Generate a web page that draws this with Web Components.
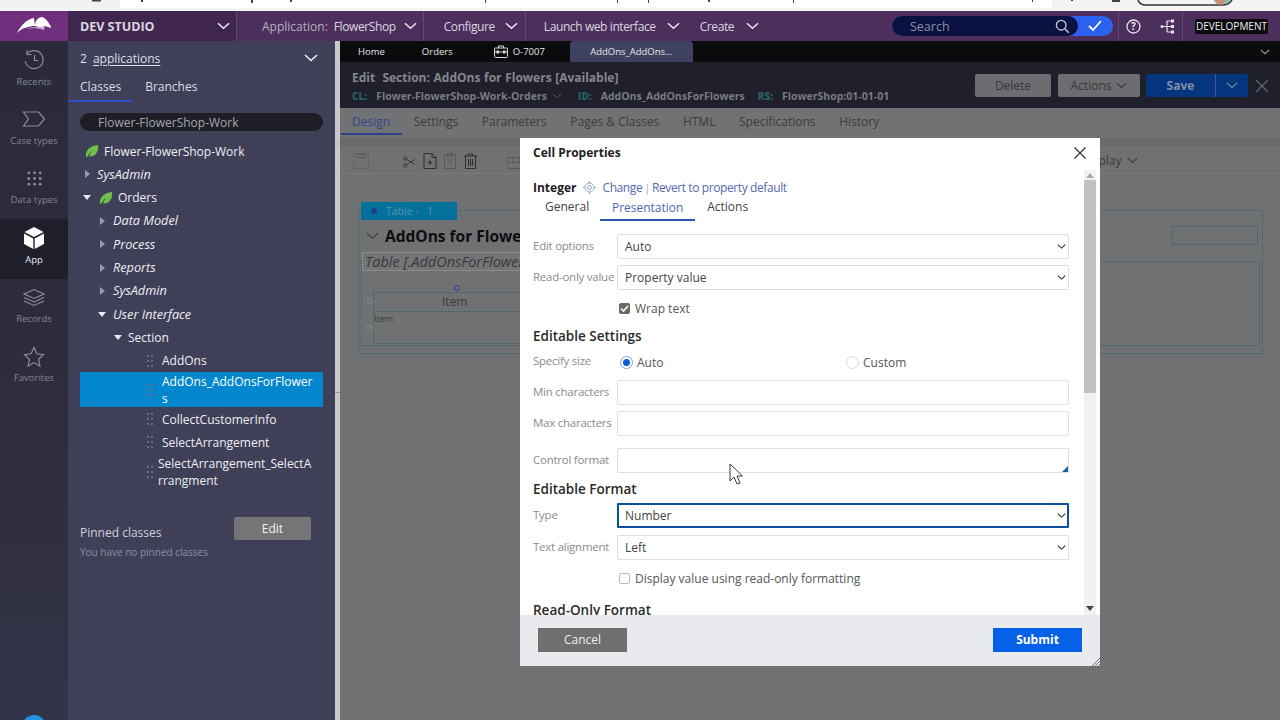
<!DOCTYPE html>
<html>
<head>
<meta charset="utf-8">
<title>Dev Studio</title>
<style>
html, body { margin: 0; height: 720px; overflow: hidden; font-family: "Open Sans", "Liberation Sans", sans-serif; background: #6f7072; }
</style>
</head>
<body>
<app-shell></app-shell>
<script>
// small svg helpers shared by the elements
const chevron = (w, color, sw = 1.6) => `<svg width="${w}" height="${Math.round(w * 0.6)}" viewBox="0 0 14 8" style="display:block;flex:none"><path d="M1 1l6 5.5L13 1" fill="none" stroke="${color}" stroke-width="${sw}"/></svg>`
const leaf = () => `<svg width="14" height="14" viewBox="0 0 14 14" style="display:block;flex:none"><path d="M1 13C0 6 5 2 13 1c1 7-3 12-9 11.500L7 6 2 13z" fill="#6fbf4b"/></svg>`

// browser chrome left over at the top of the capture
class BrowserStrip extends HTMLElement {
    constructor() {
        super()
        this.attachShadow({ mode: 'open' }).innerHTML = `
<style>
:host { display: block; height: 11px; background: #fff; overflow: hidden; }
svg { display: block; }
</style>
<svg width="1280" height="11" viewBox="0 0 1280 11">
    <rect width="120" height="11" fill="#f1f1f1"/>
    <rect x="1052" width="228" height="11" fill="#f3f3f3"/>
    <rect y="8" width="1280" height="3" fill="#f4f4f4"/>
    <path d="M92 0h9v1.500h-9zM141 0h2v2h-2zM251 0h2v3h-2zM290 0h2v2h-2zM485 0h1v3h-1zM617 0h1v3h-1zM648 0h1v3h-1zM708 0h2v2h-2zM793 0h1v3h-1zM1032 0h1v2h-1zM1071 0h2v1h-2zM1112 0h8v2h-8z" fill="#444"/>
    <path d="M1138 0c1 3 4 5 8 5h76c4 0 8-2 10-5" fill="none" stroke="#333" stroke-width="1.500"/>
    <path d="M1214 0c1 3 5 6 10 4l4-4z" fill="#c98f76"/>
    <path d="M1222 4l4-4h5c-1 2-4 4-9 4z" fill="#7fc0a6"/>
</svg>`
    }
}
customElements.define('browser-strip', BrowserStrip)

class BarMenu extends HTMLElement {
    constructor() {
        super()
        const gap = this.getAttribute('gap') || 12
        this.attachShadow({ mode: 'open' }).innerHTML = `
<style>
:host { display: flex; align-items: center; height: 30px; font-size: 12px; letter-spacing: -0.400px; color: #dcd6e0; box-sizing: border-box; }
.c { margin-left: ${gap}px; }
</style>
<slot></slot><span class="c">${chevron(13, '#eee8f0')}</span>`
    }
}
customElements.define('bar-menu', BarMenu)

class TopBar extends HTMLElement {
    constructor() {
        super()
        this.attachShadow({ mode: 'open' }).innerHTML = `
<style>
:host { display: flex; height: 30px; background: #4c2f5c; color: #dcd6e0; font-size: 12px; }
.logo { width: 68px; background: #6f2f7d; display: flex; align-items: center; justify-content: center; flex: none; }
.studio { width: 169px; background: #40264f; display: flex; align-items: center; padding-left: 12px; box-sizing: border-box; font-weight: 700; font-size: 12.500px; color: #dcd6e0; flex: none; border-right: 1px solid #5f4a6d; }
.studio span { flex: 1; }
.studio svg { margin-right: 6px; }
.dim { color: #b9aec2; margin-right: 6px; letter-spacing: 0; }
bar-menu { padding-left: 20px; padding-right: 7px; border-right: 1px solid #624a70; }
#app { padding-left: 25px; padding-right: 6px; }
#launch { padding-left: 18px; padding-right: 0; border: 0; }
#create { padding-left: 20px; padding-right: 0; border: 0; }
.search { margin-left: auto; width: 221px; height: 20px; background: #2b63ee; border-radius: 10px; display: flex; align-items: center; align-self: center; flex: none; }
.field { width: 186px; height: 20px; background: #0b1140; border-radius: 10px; display: flex; align-items: center; justify-content: space-between; padding: 0 8px 0 18px; box-sizing: border-box; color: #8d90a8; font-size: 12.500px; }
.tick { margin-left: 10px; }
.tools { margin-left: 5px; width: 65px; border-left: 1px solid #624a70; border-right: 1px solid #624a70; display: flex; align-items: center; justify-content: space-between; padding: 0 7px 0 7px; box-sizing: border-box; flex: none; }
.env { margin: 0 12px 0 12px; align-self: center; height: 15px; width: 73px; background: #0b0a10; border-radius: 2px; color: #eee; font-size: 10px; line-height: 15px; text-align: center; flex: none; }
</style>
<div class="logo">
    <svg width="36" height="18" viewBox="0 0 36 18">
        <path d="M1 16C5 8 11 2 18 1l1 8C13 9 6 11 1 16z" fill="#fff"/>
        <path d="M19 9C19 3 23 0 26 0c4 1 7 6 9 10v1l-6-2c-3 2-7 1-10 0z" fill="#fff"/>
        <path d="M10 12c5-2 12-2 19-2l-1 3c-6-2-12-2-18-1z" fill="#c9a9d0"/>
    </svg>
</div>
<div class="studio"><span>DEV STUDIO</span>${chevron(13, '#eee8f0')}</div>
<bar-menu id="app" gap="8"><span class="dim">Application:</span>FlowerShop</bar-menu>
<bar-menu id="cfg" gap="10">Configure</bar-menu>
<bar-menu id="launch" gap="11">Launch web interface</bar-menu>
<bar-menu id="create">Create</bar-menu>
<div class="search">
    <div class="field">Search
        <svg width="15" height="15" viewBox="0 0 15 15"><circle cx="6.200" cy="6.200" r="4.800" fill="none" stroke="#c9cbd8" stroke-width="1.300"/><path d="M9.800 9.800l4 4" stroke="#c9cbd8" stroke-width="1.500"/></svg>
    </div>
    <svg class="tick" width="14" height="12" viewBox="0 0 14 12"><path d="M1 6l4 4 8-9" fill="none" stroke="#fff" stroke-width="1.800"/></svg>
</div>
<div class="tools">
    <svg width="15" height="15" viewBox="0 0 15 15"><circle cx="7.500" cy="7.500" r="6.500" fill="none" stroke="#e8e4ec" stroke-width="1.300"/><text x="7.500" y="11" text-anchor="middle" font-size="10" font-weight="700" font-family="Open Sans" fill="#e8e4ec">?</text></svg>
    <svg width="15" height="15" viewBox="0 0 15 15"><path d="M2 7.500h5M7 2h4M7 7.500h4M7 13h4M7 2v11" fill="none" stroke="#e8e4ec" stroke-width="1.200"/><circle cx="2" cy="7.500" r="1.500" fill="#e8e4ec"/><rect x="11" y="0.500" width="3" height="3" fill="#e8e4ec"/><rect x="11" y="6" width="3" height="3" fill="#e8e4ec"/><rect x="11" y="11.500" width="3" height="3" fill="#e8e4ec"/></svg>
</div>
<div class="env">DEVELOPMENT</div>`
    }
}
customElements.define('top-bar', TopBar)

class RailItem extends HTMLElement {
    constructor() {
        super()
        this.attachShadow({ mode: 'open' }).innerHTML = `
<style>
:host { display: flex; flex-direction: column; align-items: center; height: 59.400px; padding-top: 7px; box-sizing: border-box; color: #83849a; font-size: 9.500px; }
:host([active]) { background: #1f1f2b; color: #e8e8ee; }
.i { height: 24px; display: flex; align-items: center; }
.l { margin-top: 2.500px; line-height: 14px; }
</style>
<div class="i"><slot name="icon"></slot></div><div class="l"><slot></slot></div>`
    }
}
customElements.define('rail-item', RailItem)

class NavRail extends HTMLElement {
    constructor() {
        super()
        const s = '#8b8c9f'
        this.attachShadow({ mode: 'open' }).innerHTML = `
<style>
:host { display: block; width: 68px; flex: none; background: linear-gradient(#2a2a3b, #2f2d3c 60%, #33344a); position: relative; overflow: hidden; }
svg { display: block; }
.help { position: absolute; left: 22px; top: 674px; width: 24px; height: 24px; border-radius: 50%; background: #1e93e0; }
</style>
<rail-item><svg slot="icon" width="24" height="24" viewBox="0 0 24 24" fill="none" stroke="${s}" stroke-width="1.200"><path d="M5 6a9 9 0 1 1-1.800 7"/><path d="M5 2v4.500h4.500M12.500 7v5.500H16"/></svg>Recents</rail-item>
<rail-item><svg slot="icon" width="24" height="18" viewBox="0 0 24 18" fill="none" stroke="${s}" stroke-width="1.200"><path d="M1.500 2h15l6 7-6 7h-15l5-7z"/></svg>Case types</rail-item>
<rail-item><svg slot="icon" width="17" height="17" viewBox="0 0 18 18" fill="${s}"><circle cx="3" cy="3" r="1.500"/><circle cx="9" cy="3" r="1.500"/><circle cx="15" cy="3" r="1.500"/><circle cx="3" cy="9" r="1.500"/><circle cx="9" cy="9" r="1.500"/><circle cx="15" cy="9" r="1.500"/><circle cx="3" cy="15" r="1.500"/><circle cx="9" cy="15" r="1.500"/><circle cx="15" cy="15" r="1.500"/></svg>Data types</rail-item>
<rail-item active><svg slot="icon" width="22" height="24" viewBox="0 0 22 24" fill="#fff"><path d="M11 1l9.500 5L11 11 1.500 6z"/><path d="M1 7.500l9.300 5V23L1 18z"/><path d="M21 7.500l-9.300 5V23L21 18z"/></svg>App</rail-item>
<rail-item><svg slot="icon" width="22" height="20" viewBox="0 0 22 20" fill="none" stroke="${s}" stroke-width="1.100"><path d="M11 1.500L21 6l-10 4.500L1 6z"/><path d="M1 9.500L11 14l10-4.500M1 13l10 4.500L21 13"/></svg>Records</rail-item>
<rail-item><svg slot="icon" width="22" height="22" viewBox="0 0 22 22" fill="none" stroke="${s}" stroke-width="1.200"><path d="M11 1.500l2.900 6.300 6.600.8-4.900 4.600 1.300 6.800-5.900-3.400-5.900 3.400 1.300-6.800L1.500 8.600l6.600-.8z"/></svg>Favorites</rail-item>
<div class="help"></div>`
    }
}
customElements.define('nav-rail', NavRail)

class TreeRow extends HTMLElement {
    constructor() {
        super()
        const caret = this.getAttribute('caret')
        const level = +(this.getAttribute('level') || 0)
        const tri = caret === 'open'
            ? `<svg width="10" height="7" viewBox="0 0 10 7"><path d="M1 1h8L5 6z" fill="#e8e8ee"/></svg>`
            : `<svg width="7" height="10" viewBox="0 0 7 10"><path d="M1 1v8l5-4z" fill="#9a9bac"/></svg>`
        let head = ''
        if (caret) head += `<span class="car">${tri}</span>`
        if (this.hasAttribute('leaf')) head += `<span class="leaf">${leaf()}</span>`
        if (this.hasAttribute('drag')) head += `<svg class="drag" width="6" height="12" viewBox="0 0 6 12" fill="#6a6b80"><rect width="2" height="2"/><rect x="4" width="2" height="2"/><rect y="5" width="2" height="2"/><rect x="4" y="5" width="2" height="2"/><rect y="10" width="2" height="2"/><rect x="4" y="10" width="2" height="2"/></svg>`
        this.attachShadow({ mode: 'open' }).innerHTML = `
<style>
:host { display: flex; align-items: center; min-height: 23.300px; box-sizing: border-box; font-size: 12px; line-height: 17px; color: #eeeef3; padding-left: ${[2, 17, 33, 67][level]}px; }
:host([italic]) { font-style: italic; font-size: 12.700px; }
:host([italic][level]) .car { margin-right: 6px; }
:host([selected]) { background: #0287cf; min-height: 35px; color: #fff; }
:host([root]) { padding-left: 5px; }
:host([tight]) { margin-top: 1.500px; }
.car { width: 10px; display: flex; justify-content: center; flex: none; margin-right: 5px; }
.leaf { flex: none; margin-right: 5px; }
.car + .leaf { margin-left: 2px; }
.drag { flex: none; margin-right: 9px; }
:host([tight]) .drag { margin-right: 5px; }
.t { word-break: break-all; min-width: 0; flex: 1; padding-right: 8px; }
</style>
${head}<span class="t"><slot></slot></span>`
    }
}
customElements.define('tree-row', TreeRow)

class ExplorerPanel extends HTMLElement {
    constructor() {
        super()
        this.attachShadow({ mode: 'open' }).innerHTML = `
<style>
:host { display: block; width: 267px; flex: none; background: #3f4058; box-sizing: border-box; padding: 0 12px; color: #dedee6; font-size: 12px; overflow: hidden; }
.apps { height: 34px; display: flex; align-items: center; justify-content: space-between; padding-right: 5px; }
.apps u { margin-left: 6px; text-underline-offset: 2px; }
.tabs { display: flex; margin: 0 -12px; padding-left: 12px; height: 27px; position: relative; gap: 24px; line-height: 24px; }
.tabs::after { content: ""; position: absolute; left: 0; bottom: 0; width: 65px; height: 2px; background: #2c4fc0; }
.find { margin-top: 11px; height: 18px; line-height: 19px; border-radius: 9px; background: #1d1e26; color: #a5a6ad; padding-left: 18px; }
.tree { margin-top: 8.400px; }
.pin { display: flex; justify-content: space-between; margin-top: 27.500px; padding-right: 12px; }
.pin span { margin-top: 8px; line-height: 16px; color: #d0d0da; }
.edit { width: 77px; height: 23px; line-height: 23px; text-align: center; background: #757577; border-radius: 2px; color: #f2f2f2; }
.none { font-size: 10px; color: #8d8ea2; line-height: 14px; margin-top: 4px; }
</style>
<div class="apps"><span>2<u>applications</u></span>${chevron(14, '#eee')}</div>
<div class="tabs"><span>Classes</span><span>Branches</span></div>
<div class="find">Flower-FlowerShop-Work</div>
<div class="tree">
    <tree-row root leaf>Flower-FlowerShop-Work</tree-row>
    <tree-row caret="closed" italic>SysAdmin</tree-row>
    <tree-row caret="open" leaf>Orders</tree-row>
    <tree-row level="1" caret="closed" italic>Data Model</tree-row>
    <tree-row level="1" caret="closed" italic>Process</tree-row>
    <tree-row level="1" caret="closed" italic>Reports</tree-row>
    <tree-row level="1" caret="closed" italic>SysAdmin</tree-row>
    <tree-row level="1" caret="open" italic>User Interface</tree-row>
    <tree-row level="2" caret="open">Section</tree-row>
    <tree-row level="3" drag>AddOns</tree-row>
    <tree-row level="3" drag selected>AddOns_AddOnsForFlowers</tree-row>
    <tree-row level="3" drag>CollectCustomerInfo</tree-row>
    <tree-row level="3" drag>SelectArrangement</tree-row>
    <tree-row level="3" drag tight>SelectArrangement_SelectArrangment</tree-row>
</div>
<div class="pin"><span>Pinned classes</span><div class="edit">Edit</div></div>
<div class="none">You have no pinned classes</div>`
    }
}
customElements.define('explorer-panel', ExplorerPanel)

class DocTabs extends HTMLElement {
    constructor() {
        super()
        this.attachShadow({ mode: 'open' }).innerHTML = `
<style>
:host { display: flex; align-items: flex-end; height: 21px; background: #0b0b0d; color: #e4e4e8; font-size: 9.500px; padding-left: 18px; position: relative; }
span { line-height: 21px; }
.o { margin-left: 37px; }
.c { margin-left: 41px; display: flex; align-items: center; gap: 5px; }
.a { margin-left: 25px; width: 123px; height: 21px; background: #3e4260; border-radius: 4px 4px 0 0; text-align: center; }
.m { position: absolute; right: 10px; top: 8px; }
</style>
<span>Home</span><span class="o">Orders</span>
<span class="c"><svg width="14" height="13" viewBox="0 0 14 13" fill="none" stroke="#d8d8dc"><rect x="0.500" y="3" width="13" height="9.500" rx="1"/><path d="M4.500 3V1h5v2M.5 7h13"/><rect x="3" y="6" width="1.500" height="2" fill="#d8d8dc"/><rect x="9.500" y="6" width="1.500" height="2" fill="#d8d8dc"/></svg>O-7007</span>
<span class="a">AddOns_AddOns...</span>
<span class="m">${chevron(10, '#99999d')}</span>`
    }
}
customElements.define('doc-tabs', DocTabs)

class EditHeader extends HTMLElement {
    constructor() {
        super()
        this.attachShadow({ mode: 'open' }).innerHTML = `
<style>
:host { display: flex; height: 46px; background: #1f202b; padding-left: 12px; color: #85868c; font-weight: 700; position: relative; }
.txt { flex: 1; }
.h { font-size: 12px; line-height: 16px; margin-top: 8px; word-spacing: 0.500px; }
.s { font-size: 10.500px; line-height: 14px; margin-top: 3px; display: flex; align-items: center; color: #797b82; white-space: nowrap; }
.s b { color: #2b5e5f; margin-right: 9px; font-size: 10px; }
.s svg { margin: 0 0 0 5px; }
.btns { display: flex; align-items: center; height: 23px; margin-top: 12px; font-size: 12px; font-weight: 400; color: #37383b; }
.b { height: 23px; line-height: 23px; background: #6c6d70; border-radius: 2px; text-align: center; box-sizing: border-box; }
.act { display: flex; align-items: center; justify-content: center; gap: 5px; width: 82px; margin-left: 7px; }
.save { width: 69px; margin-left: 6px; background: #04357d; color: #7f8fa9; font-weight: 700; border-radius: 2px 0 0 2px; }
.more { width: 33px; display: flex; align-items: center; justify-content: center; background: #04357d; border-left: 1px solid #3a5a90; border-radius: 0 2px 2px 0; box-sizing: border-box; }
.x { margin: 0 12px 0 8px; display: block; }
</style>
<div class="txt">
    <div class="h">Edit&nbsp; Section: AddOns for Flowers [Available]</div>
    <div class="s"><b>CL:</b>Flower-FlowerShop-Work-Orders ${chevron(10, '#5e6068', 1.200)}<b style="margin-left:16px">ID:</b>AddOns_AddOnsForFlowers<b style="margin-left:13px">RS:</b>FlowerShop:01-01-01</div>
</div>
<div class="btns">
    <div class="b" style="width:76px">Delete</div>
    <div class="b act">Actions ${chevron(11, '#37383b', 1.400)}</div>
    <div class="b save">Save</div>
    <div class="b more">${chevron(12, '#7f8fa9', 1.400)}</div>
    <svg class="x" width="12" height="12" viewBox="0 0 12 12"><path d="M0 0l12 12M12 0L0 12" stroke="#6e6f74" stroke-width="1.200"/></svg>
</div>`
    }
}
customElements.define('edit-header', EditHeader)

class DesignCanvas extends HTMLElement {
    constructor() {
        super()
        this.attachShadow({ mode: 'open' }).innerHTML = `
<style>
:host { display: block; flex: 1; background: #707173; color: #3c3d40; font-size: 12px; position: relative; overflow: hidden; }
.tabs { height: 30px; display: flex; gap: 23.600px; padding-left: 12px; line-height: 27px; background: #717274; position: relative; color: #3c3d40; }
.tabs .on { color: #34458a; }
.tabs::after { content: ""; position: absolute; left: 1px; bottom: 3px; width: 61px; height: 2px; background: #2b3f8c; }
.strip { height: 9px; background: #6a6b6d; }
.tool { height: 27px; box-sizing: border-box; border-top: 1px solid #747577; border-bottom: 1px solid #787a7c; position: relative; }
.tool > svg { position: absolute; top: 5px; }
.disp { position: absolute; left: 741px; top: 4px; display: flex; align-items: center; gap: 5px; color: #38393c; }
.out { margin: 36px 17px 0 18px; height: 144px; box-sizing: border-box; border: 1px dotted #33606e; position: relative; }
.tag { position: absolute; left: 2px; top: -9px; width: 96px; height: 18px; line-height: 18px; background: #04709c; color: #5d93a8; font-size: 10.500px; padding-left: 25px; box-sizing: border-box; }
.tag i { position: absolute; left: 10px; top: 6px; width: 6px; height: 6px; border-radius: 50%; background: #1a3f8c; }
.title { display: flex; align-items: center; height: 19px; margin: 15px 4px 0 7px; }
.title b { font-size: 15.500px; color: #0d0d0f; margin-left: 6px; white-space: nowrap; }
.ph { margin-left: auto; width: 86px; height: 19px; box-sizing: border-box; border: 1px dotted #33606e; }
.in { margin: 16px 2px 0 2px; height: 85px; box-sizing: border-box; border: 1px dotted #33606e; position: relative; }
.name { position: absolute; left: 0; top: -10px; width: 400px; height: 19px; line-height: 17px; border: 1px solid #8a8a8a; background: #747577; font-style: italic; font-size: 14.500px; padding-left: 2px; box-sizing: border-box; color: #38393d; white-space: nowrap; }
.dot { position: absolute; left: 92px; top: 23px; width: 4px; height: 4px; border-radius: 50%; border: 1px solid #3a3f8c; }
.hd { position: absolute; left: 11px; top: 30px; width: 700px; box-sizing: border-box; border: 1px dotted #33606e; height: 20px; line-height: 18px; padding-left: 68px; font-size: 12px; }
.bd { position: absolute; left: 11px; top: 50px; width: 700px; box-sizing: border-box; height: 32px; border-left: 1px dotted #33606e; border-bottom: 1px dotted #33606e; font-size: 9px; line-height: 14px; }
.h1, .h2 { position: absolute; left: 5px; width: 4px; height: 4px; border-radius: 50%; border: 1px solid #85868a; }
.h1 { top: 36px; } .h2 { top: 63px; }
</style>
<div class="tabs"><span class="on">Design</span><span>Settings</span><span>Parameters</span><span>Pages &amp; Classes</span><span>HTML</span><span>Specifications</span><span>History</span></div>
<div class="strip"></div>
<div class="tool">
    <svg style="left:13px" width="16" height="16" viewBox="0 0 16 16" fill="none" stroke="#58595c"><rect x="0.500" y="0.500" width="15" height="15" stroke-dasharray="2 2"/><rect x="3.500" y="1.500" width="9" height="3"/></svg>
    <svg style="left:62px;top:8px" width="15" height="12" viewBox="0 0 15 14" fill="none" stroke="#2e2f32"><circle cx="2.500" cy="3" r="1.800"/><circle cx="2.500" cy="11" r="1.800"/><path d="M4 4l10 6M4 10l10-6"/></svg>
    <svg style="left:83px" width="14" height="16" viewBox="0 0 14 16" fill="none" stroke="#2e2f32"><path d="M1 .5h8l4 4v11H1zM9 .5v4h4M7 7v5M4.500 9.500h5"/></svg>
    <svg style="left:104px" width="12" height="16" viewBox="0 0 12 16" fill="none" stroke="#5a5b5e"><rect x="0.500" y="2" width="11" height="13.500"/><rect x="3.500" y="0.500" width="5" height="2.500"/><path d="M3 7h6M3 10h6"/></svg>
    <svg style="left:124px" width="13" height="16" viewBox="0 0 13 16" fill="none" stroke="#2e2f32"><path d="M0 3h13M4 3V1h5v2M1.500 3v12.500h10V3M4.500 6v7M6.500 6v7M8.500 6v7"/></svg>
    <svg style="left:167px;top:9px" width="20" height="12" viewBox="0 0 20 12" fill="none" stroke="#5a5b5e"><path d="M0 .5h20M0 5.500h20M6 .5v5M13 .5v5M0 .5v11h20V.5"/></svg>
    <span class="disp">Display ${chevron(11, '#38393c', 1.400)}</span>
</div>
<div class="out">
    <div class="tag"><i></i>Table -&nbsp;&nbsp; 1</div>
    <div class="title">${chevron(13, '#3a3b3e', 1.200)}<b>AddOns for Flowers</b><div class="ph"></div></div>
    <div class="in">
        <div class="name">Table [.AddOnsForFlowers]</div>
        <div class="dot"></div>
        <div class="h1"></div><div class="h2"></div>
        <div class="hd">Item</div>
        <div class="bd">Item</div>
    </div>
</div>`
    }
}
customElements.define('design-canvas', DesignCanvas)

// a label in the 84px column next to its control
class FieldRow extends HTMLElement {
    constructor() {
        super()
        this.attachShadow({ mode: 'open' }).innerHTML = `
<style>
:host { display: flex; align-items: center; min-height: 20px; }
.l { width: 84px; flex: none; font-size: 11.500px; letter-spacing: -0.250px; color: #8b8b8b; white-space: nowrap; margin-bottom: 2px; }
:host([up]) .l { margin-bottom: 3px; }
.c { flex: 1; min-width: 0; display: flex; align-items: center; }
</style>
<span class="l">${this.getAttribute('label') || ''}</span><div class="c"><slot></slot></div>`
    }
}
customElements.define('field-row', FieldRow)

class FormBox extends HTMLElement {
    constructor() {
        super()
        const arrow = this.hasAttribute('select') ? chevron(9, '#333', 1.800) : ''
        this.attachShadow({ mode: 'open' }).innerHTML = `
<style>
:host { display: flex; flex: 1; align-items: center; justify-content: space-between; height: 25px; box-sizing: border-box; border: 1px solid #dfdfe2; border-radius: 2px; padding: 0 2px 0 7px; font-size: 12px; color: #444; background: #fff; position: relative; }
:host([focus]) { border: 2px solid #0b4f9e; border-radius: 1px; padding-left: 6px; padding-right: 1px; }
:host([area])::after { content: ""; position: absolute; right: 0; bottom: 0; border-style: solid; border-width: 0 0 6px 6px; border-color: transparent transparent #1a5fb0 transparent; }
</style>
<span><slot></slot></span>${arrow}`
    }
}
customElements.define('form-box', FormBox)

class CellDialog extends HTMLElement {
    constructor() {
        super()
        this.attachShadow({ mode: 'open' }).innerHTML = `
<style>
:host { display: flex; flex-direction: column; position: absolute; left: 520px; top: 138px; width: 580px; height: 528px; background: #fff; color: #3a3a3a; font-size: 12px; overflow: hidden; }
.head { height: 28px; flex: none; display: flex; align-items: center; justify-content: space-between; padding: 0 14px 0 13px; font-weight: 700; font-size: 12px; color: #222; box-sizing: border-box; }
.head svg { margin-top: 2px; }
.mid { flex: 1; display: flex; min-height: 0; padding-top: 4px; }
.body { flex: 1; min-width: 0; padding: 8px 15px 0 13px; overflow: hidden; }
.bar { width: 12px; margin-right: 4px; flex: none; background: #f1f1f1; display: flex; flex-direction: column; align-items: center; position: relative; }
.thumb { width: 100%; height: 213px; margin-top: 2px; background: #c1c1c1; }
.bar svg { display: block; margin-top: 3px; }
.bar .down { position: absolute; bottom: 4px; }
.int { display: flex; align-items: center; height: 18px; color: #5768b4; letter-spacing: -0.400px; }
.int b { color: #222; margin-right: 7px; letter-spacing: 0; }
.int svg { margin-right: 6px; }
.int i { font-style: normal; color: #aaa; margin: 0 2px; font-size: 11px; }
.tabs { display: flex; height: 23px; margin-top: 2px; color: #444; padding-left: 12px; line-height: 18px; position: relative; }
.tabs .on { color: #4f63b4; width: 95px; margin: 0 0 0 11px; box-sizing: border-box; text-align: center; border-bottom: 2px solid #2d55b3; line-height: 20px; height: 23px; }
.tabs .ac { margin-left: 12px; }
h3 { margin: 0; font-size: 13.500px; font-weight: 600; line-height: 20px; color: #2a2a2a; white-space: nowrap; }
.chk { display: flex; align-items: center; gap: 5px; color: #555; margin-left: 2px; }
.box { width: 11px; height: 11px; box-sizing: border-box; border-radius: 2px; border: 1px solid #bbb; background: #fff; display: block; flex: none; }
.box.on { background: #6b6b6b; border-color: #6b6b6b; position: relative; }
.radio { display: flex; align-items: center; gap: 4px; color: #555; width: 223px; flex: none; margin-left: 3px; }
.r { width: 13px; height: 13px; border-radius: 50%; border: 1px solid #d8d8d8; box-sizing: border-box; flex: none; display: block; }
.r.on { border-color: #7d9fd4; padding: 2px; background: content-box #0b5fd1; }
.foot { height: 51px; flex: none; background: #e9eaee; display: flex; align-items: center; justify-content: space-between; padding: 0 18px 2px; box-sizing: border-box; position: relative; }
.cancel { width: 89px; height: 24px; line-height: 24px; text-align: center; background: #6f6f70; color: #eee; }
.submit { width: 89px; height: 24px; line-height: 24px; text-align: center; background: #0760e8; color: #fff; font-weight: 700; }
.grip { position: absolute; right: 0; bottom: 0; display: block; }
.cursor { position: absolute; left: 209px; top: 325px; display: block; }
</style>
<div class="head">Cell Properties
    <svg width="12" height="12" viewBox="0 0 12 12"><path d="M.5.5l11 11M11.500.5l-11 11" stroke="#333" stroke-width="1.200"/></svg>
</div>
<div class="mid">
    <div class="body">
        <div class="int"><b>Integer</b>
            <svg width="13" height="13" viewBox="0 0 13 13" fill="none" stroke="#9aa3c4"><circle cx="6.500" cy="6.500" r="4.500"/><circle cx="6.500" cy="6.500" r="2"/><path d="M6.500 0v2M6.500 11v2M0 6.500h2M11 6.500h2"/></svg>
            Change<i>|</i>Revert to property default</div>
        <div class="tabs"><span>General</span><span class="on">Presentation</span><span class="ac">Actions</span></div>
        <field-row label="Edit options" style="margin-top:13px"><form-box select>Auto</form-box></field-row>
        <field-row label="Read-only value" style="margin-top:6px"><form-box select>Property value</form-box></field-row>
        <field-row style="margin-top:8px"><span class="chk"><span class="box on"><svg width="9" height="9" viewBox="1 1 9 9" style="display:block"><path d="M2 5.500l2.500 2.500L9 3" fill="none" stroke="#fff" stroke-width="1.600"/></svg></span>Wrap text</span></field-row>
        <h3 style="margin-top:8px">Editable Settings</h3>
        <field-row label="Specify size" up style="margin-top:6px"><span class="radio"><span class="r on"></span>Auto</span><span class="radio"><span class="r"></span>Custom</span></field-row>
        <field-row label="Min characters" style="margin-top:8px"><form-box></form-box></field-row>
        <field-row label="Max characters" style="margin-top:6px"><form-box></form-box></field-row>
        <field-row label="Control format" style="margin-top:12px"><form-box area></form-box></field-row>
        <h3 style="margin-top:6px">Editable Format</h3>
        <field-row label="Type" style="margin-top:4px"><form-box select focus>Number</form-box></field-row>
        <field-row label="Text alignment" style="margin-top:7px"><form-box select>Left</form-box></field-row>
        <field-row style="margin-top:8px"><span class="chk"><span class="box"></span>Display value using read-only formatting</span></field-row>
        <h3 style="margin-top:12px">Read-Only Format</h3>
    </div>
    <div class="bar">
        <svg width="8" height="5" viewBox="0 0 8 5"><path d="M0 5h8L4 0z" fill="#aaa"/></svg>
        <div class="thumb"></div>
        <svg class="down" width="8" height="5" viewBox="0 0 8 5"><path d="M0 0h8L4 5z" fill="#444"/></svg>
    </div>
</div>
<div class="foot"><div class="cancel">Cancel</div><div class="submit">Submit</div>
    <svg class="grip" width="8" height="8" viewBox="0 0 8 8" stroke="#777"><path d="M0 8l8-8M3 8l5-5M6 8l2-2"/></svg>
</div>
<svg class="cursor" width="15" height="23" viewBox="0 0 15 23"><path d="M1 1v17l4-4 3 7 3-1-3-7h5.500z" fill="#fff" stroke="#3a3a3a" stroke-width="1"/></svg>`
    }
}
customElements.define('cell-dialog', CellDialog)

class AppShell extends HTMLElement {
    constructor() {
        super()
        this.attachShadow({ mode: 'open' }).innerHTML = `
<style>
:host { display: flex; flex-direction: column; height: 720px; position: relative; overflow: hidden; }
.main { flex: 1; display: flex; min-height: 0; }
.gutter { width: 5px; flex: none; background: linear-gradient(#c8c8cb 351px, #9a9a9d 351px, #9a9a9d 352px, #c8c8cb 352px); }
.work { flex: 1; min-width: 0; display: flex; flex-direction: column; }
</style>
<browser-strip></browser-strip>
<top-bar></top-bar>
<div class="main">
    <nav-rail></nav-rail>
    <explorer-panel></explorer-panel>
    <div class="gutter"></div>
    <div class="work">
        <doc-tabs></doc-tabs>
        <edit-header></edit-header>
        <design-canvas></design-canvas>
    </div>
</div>
<cell-dialog></cell-dialog>`
    }
}
customElements.define('app-shell', AppShell)
</script>
</body>
</html>
